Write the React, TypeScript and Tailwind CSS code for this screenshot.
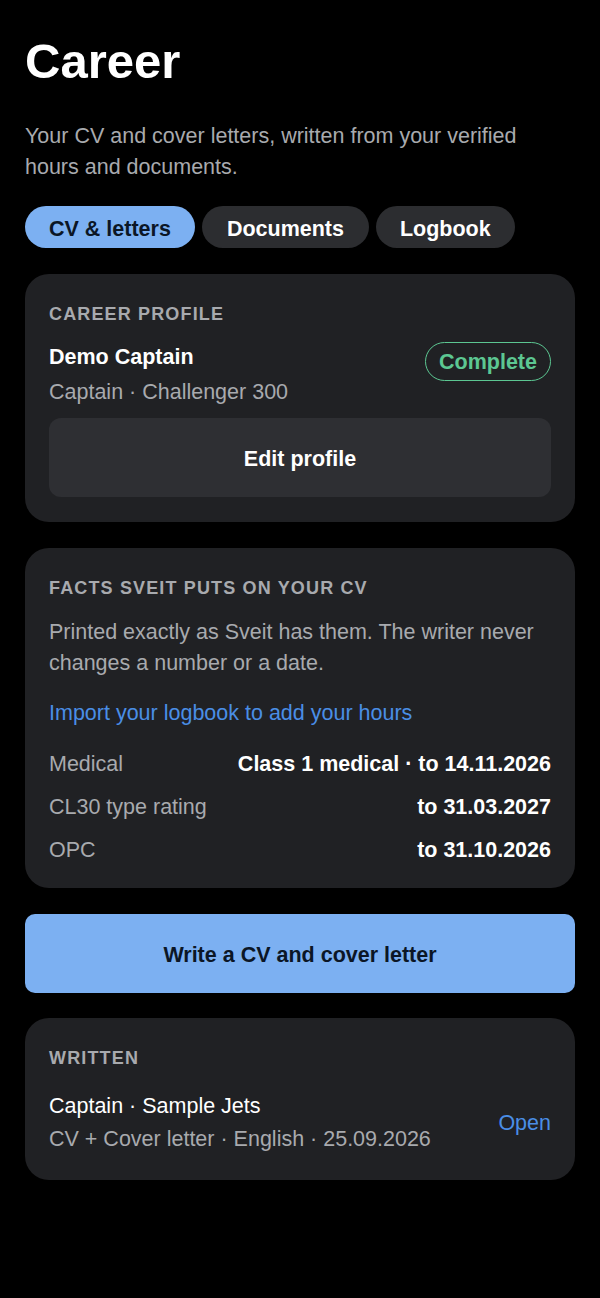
const facts = [
  { label: 'Medical', value: 'Class 1 medical · to 14.11.2026' },
  { label: 'CL30 type rating', value: 'to 31.03.2027' },
  { label: 'OPC', value: 'to 31.10.2026' },
]

const tabs = ['CV & letters', 'Documents', 'Logbook']

const SectionLabel = ({ children }: { children: string }) => (
  <div className="text-[18px] font-bold uppercase leading-[26px] tracking-[1.15px] text-[#a8aaae]">
    {children}
  </div>
)

export default function App() {
  return (
    <div
      className="min-h-[1298px] bg-black px-[25px] pb-24 pt-[32px] text-[21.5px] text-white"
      style={{ fontFamily: '"Liberation Sans", Arial, sans-serif' }}
    >
      <h1 className="text-[49px] font-bold leading-[1.2]">Career</h1>
      <p className="mt-[30px] leading-[31px] text-[#a8aaae]">
        Your CV and cover letters, written from your verified hours and documents.
      </p>

      <div className="mt-[23px] flex gap-[7px]">
        {tabs.map((tab, i) => (
          <button
            key={tab}
            className={`flex h-[42px] items-center rounded-full pt-1 font-bold ${
              i === 1 ? 'px-[25px]' : 'px-6'
            } ${i === 0 ? 'bg-[#7cb0f2] text-[#0b1626]' : 'bg-[#2c2d30] text-white'}`}
          >
            {tab}
          </button>
        ))}
      </div>

      <section className="mt-[26px] rounded-[24px] bg-[#202124] px-6 pb-[25px] pt-[27px]">
        <SectionLabel>Career profile</SectionLabel>
        <div className="mt-[15px] flex items-start justify-between">
          <div>
            <div className="font-bold leading-[30px]">Demo Captain</div>
            <div className="mt-[5px] leading-[30px] text-[#a8aaae]">Captain · Challenger 300</div>
          </div>
          <span className="flex h-[39px] items-center rounded-full border-[1.5px] border-[#5cc792] px-[13px] pt-[2px] font-bold text-[#5cc792]">
            Complete
          </span>
        </div>
        <button className="mt-[11px] flex h-[79px] w-full items-center justify-center rounded-[12px] bg-[#2e2f33] pt-1 font-bold">
          Edit profile
        </button>
      </section>

      <section className="mt-[26px] rounded-[24px] bg-[#202124] px-6 pb-[22px] pt-[27px]">
        <SectionLabel>Facts Sveit puts on your CV</SectionLabel>
        <p className="mt-[16px] leading-[31px] text-[#a8aaae]">
          Printed exactly as Sveit has them. The writer never changes a number or a date.
        </p>
        <a className="mt-[19px] block leading-[31px] text-[#4a8ee6]">
          Import your logbook to add your hours
        </a>
        <div className="mt-5 flex flex-col gap-3">
          {facts.map((f) => (
            <div key={f.label} className="flex justify-between leading-[31px]">
              <span className="text-[#a8aaae]">{f.label}</span>
              <span className="font-bold">{f.value}</span>
            </div>
          ))}
        </div>
      </section>

      <button className="mt-[26px] flex h-[79px] w-full items-center justify-center rounded-[10px] bg-[#7cb0f2] pt-1 font-bold text-[#0b1626]">
        Write a CV and cover letter
      </button>

      <section className="mt-[25px] rounded-[24px] bg-[#202124] px-6 pb-[26px] pt-[27px]">
        <SectionLabel>Written</SectionLabel>
        <div className="mt-5 flex items-center justify-between">
          <div>
            <div className="leading-[30px]">Captain · Sample Jets</div>
            <div className="mt-[3px] leading-[30px] text-[#a8aaae]">
              CV + Cover letter · English · 25.09.2026
            </div>
          </div>
          <a className="pt-[2px] text-[#4a8ee6]">Open</a>
        </div>
      </section>
    </div>
  )
}
